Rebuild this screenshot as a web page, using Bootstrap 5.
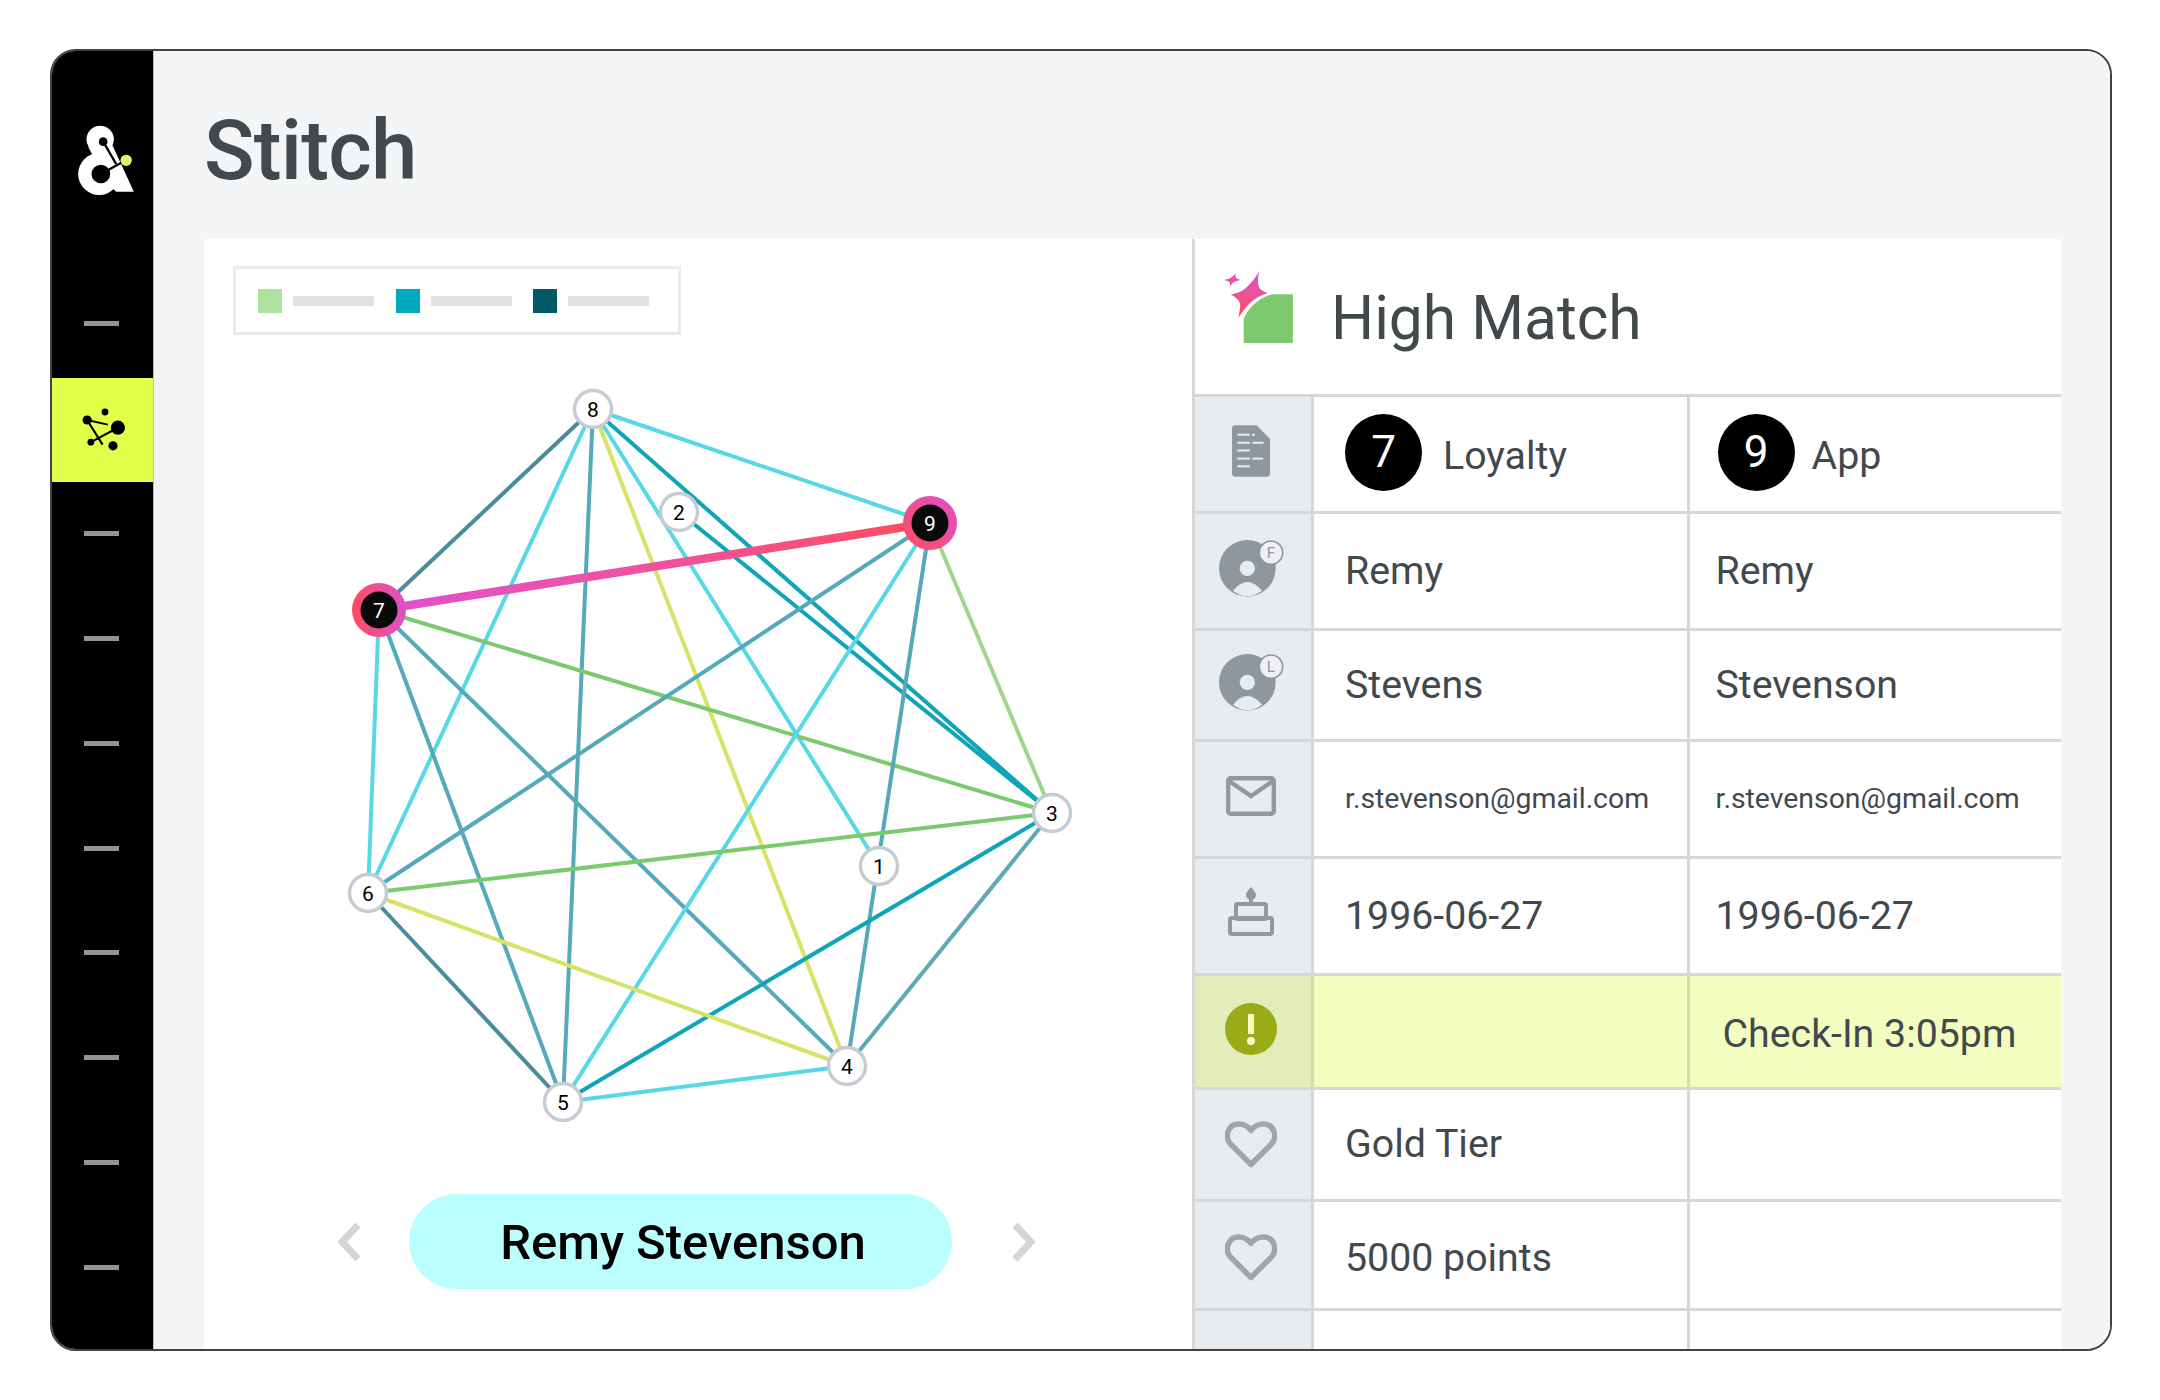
<!DOCTYPE html>
<html lang="en">
<head>
<meta charset="utf-8">
<title>Stitch</title>
<link href="https://cdn.jsdelivr.net/npm/bootstrap@5.3.0/dist/css/bootstrap.min.css" rel="stylesheet">
<style>
html,body{background:#fff;}
body{font-family:Roboto,"Liberation Sans",sans-serif;color:#42494c;width:2160px;height:1400px;overflow:hidden;}
.shell{width:2062px;height:1302px;margin:49px 0 0 50px;border:2px solid #3f4345;border-radius:26px;}
.rail{width:102px;flex:none;background:#000;border-right:1px solid #b9bdc1;}
.rail-logo{height:220px;padding-top:69px;flex:none;}
.rail-logo svg{display:block;margin-left:22px;}
.rail-item{height:104.95px;flex:none;}
.rail-dash{width:35px;height:5px;background:#919599;margin-left:-3px;}
.rail-on{background:#e4ff4a;height:104px;margin:2px 0 -1.2px -1px;flex:none;}
.rail-on svg{margin:0 0 3px 6px;}
.stage{background:#f3f5f7;min-width:0;}
.page-title{height:188px;padding-left:50px;flex:none;}
.page-title h1{font-size:83.5px;font-weight:500;color:#42494c;margin:12px 0 0 0;line-height:1;letter-spacing:-.8px;}
.sheet{margin:0 49px 0 50px;min-height:0;}
.graph{width:988px;flex:none;padding:27px 0 0 29px;}
.legend-box{width:448px;height:69px;border:3px solid #e9ebed;padding-left:22px;}
.sw{width:24px;height:24px;}
.sw-a{background:#ade39c;}.sw-b{background:#00a9bd;}.sw-c{background:#005a68;}
.lg-bar{width:81px;height:10px;background:#e0e3e6;margin:0 21.5px 0 11px;}
.graph > svg{display:block;margin:15px 0 0 -29px;}
.who-row{margin:49px 0 0 104px;}
.who{width:543px;height:95px;background:#bbfefe;color:#000;font-size:49px;font-weight:500;margin:0 59px 0 47px;line-height:1;flex:none;padding:1px 0 0 5px;}
.info{border-left:3px solid #d5d8db;min-width:0;}
.info-head{height:155px;padding-left:29px;flex:none;}
.info-head svg{margin:0 38px 20px 0;flex:none;}
.info-head span{font-size:60.5px;line-height:1;margin-top:6px;}
.trow{border-top:3px solid #d5d8db;height:117px;font-size:39.3px;flex:none;}
.trow.h111{height:111px}.trow.h114{height:114px}.trow.h112{height:112px}.trow.h109{height:109px}.trow.h60{height:60px}
.ticon{width:116px;flex:none;background:#e9ecef;padding:0 4px 6px 0;}
.ticon.icon-mid{padding-bottom:0;}
.ticon.icon-low{padding:5px 4px 0 0;}
.ticon.icon-up{padding-bottom:10px;}
.tcell{width:375.5px;flex:none;border-left:3px solid #d5d8db;padding-left:31px;}
.tcell+.tcell{padding-left:26px;}
.small-mail{font-size:28.4px;}
.alert-row{background:#f3fdbf;}
.alert-row .ticon{background:#e3edbb;}
.alert-row .tcell{border-left-color:#d4dcaf;}
.alert-row .tcell+.tcell span{margin:6px 0 0 7px;}
.num{width:77px;height:77px;background:#000;color:#fff;font-size:44px;margin:0 21px 4px 0;line-height:1;flex:none;}
.tcell+.tcell .num{margin-right:17px;margin-left:2px;}
.lift{position:relative;top:2px;}
.low-text{margin-top:6px;}
.graph text{font-family:Roboto,"Liberation Sans",sans-serif;font-size:21px;text-anchor:middle;}
</style>
</head>
<body>
<div class="shell d-flex overflow-hidden">
  <nav class="rail d-flex flex-column">
    <div class="rail-logo">
      <svg width="67" height="80" viewBox="100 60 200 240">
        <circle cx="178" cy="118" r="41" fill="#fff"/>
        <circle cx="175" cy="222" r="63" fill="#fff"/>
        <polygon points="142,140 212,130 279,275 226,275 200,250" fill="#fff"/>
        <circle cx="187" cy="125" r="13" fill="#000"/>
        <line x1="187" y1="125" x2="226" y2="192" stroke="#000" stroke-width="7"/>
        <circle cx="180" cy="222" r="28" fill="#000"/>
        <line x1="180" y1="222" x2="255" y2="181" stroke="#000" stroke-width="7"/>
        <circle cx="256" cy="181" r="17" fill="#e0f868"/>
      </svg>
    </div>
    <div class="rail-item d-flex align-items-center justify-content-center"><div class="rail-dash"></div></div>
    <div class="rail-on d-flex align-items-center justify-content-center">
      <svg width="48" height="48" viewBox="118 104 156 144">
        <g stroke="#000" fill="none"><line x1="138" y1="150" x2="205" y2="165" stroke-width="6"/><line x1="138" y1="150" x2="188" y2="230" stroke-width="7"/><line x1="150" y1="222" x2="238" y2="175" stroke-width="7"/></g>
        <circle cx="138" cy="150" r="15"/><circle cx="196" cy="124" r="11"/><circle cx="238" cy="175" r="23"/><circle cx="150" cy="222" r="11"/><circle cx="222" cy="234" r="15"/>
      </svg>
    </div>
    <div class="rail-item d-flex align-items-center justify-content-center"><div class="rail-dash"></div></div>
    <div class="rail-item d-flex align-items-center justify-content-center"><div class="rail-dash"></div></div>
    <div class="rail-item d-flex align-items-center justify-content-center"><div class="rail-dash"></div></div>
    <div class="rail-item d-flex align-items-center justify-content-center"><div class="rail-dash"></div></div>
    <div class="rail-item d-flex align-items-center justify-content-center"><div class="rail-dash"></div></div>
    <div class="rail-item d-flex align-items-center justify-content-center"><div class="rail-dash"></div></div>
    <div class="rail-item d-flex align-items-center justify-content-center"><div class="rail-dash"></div></div>
    <div class="rail-item d-flex align-items-center justify-content-center"><div class="rail-dash"></div></div>
  </nav>
  <main class="stage flex-grow-1 d-flex flex-column">
    <div class="page-title d-flex align-items-center"><h1>Stitch</h1></div>
    <div class="sheet bg-white d-flex flex-grow-1 overflow-hidden">
      <section class="graph">
        <div class="legend-box d-flex align-items-center">
          <div class="sw sw-a"></div><div class="lg-bar"></div>
          <div class="sw sw-b"></div><div class="lg-bar"></div>
          <div class="sw sw-c"></div><div class="lg-bar"></div>
        </div>
        <svg width="988" height="795" viewBox="204 350 988 795">
          <defs>
            <linearGradient id="gl" gradientUnits="userSpaceOnUse" x1="379" y1="610" x2="930" y2="523"><stop offset="0" stop-color="#e050cc"/><stop offset=".4" stop-color="#ec52aa"/><stop offset="1" stop-color="#ff4d5e"/></linearGradient>
            <linearGradient id="gr7" x1="0" y1="0" x2="1" y2="0"><stop offset="0" stop-color="#ff4d5e"/><stop offset="1" stop-color="#dd50cc"/></linearGradient>
            <linearGradient id="gr9" x1="0" y1="1" x2="1" y2="0"><stop offset="0" stop-color="#ff4d5e"/><stop offset="1" stop-color="#dd50cc"/></linearGradient>
          </defs>
          <g stroke-width="4" fill="none">
            <line x1="593" y1="409" x2="379" y2="610" stroke="#4a8b9c"/>
            <line x1="593" y1="409" x2="368" y2="893" stroke="#57d8e7"/>
            <line x1="593" y1="409" x2="563" y2="1102" stroke="#54a9ba"/>
            <line x1="593" y1="409" x2="847" y2="1066" stroke="#d8e264"/>
            <line x1="593" y1="409" x2="879" y2="866" stroke="#57d8e7"/>
            <line x1="593" y1="409" x2="1052" y2="813" stroke="#0ea5b8"/>
            <line x1="593" y1="409" x2="930" y2="523" stroke="#57d8e7"/>
            <line x1="679" y1="512" x2="1052" y2="813" stroke="#0ea5b8"/>
            <line x1="379" y1="610" x2="1052" y2="813" stroke="#7bca6e"/>
            <line x1="379" y1="610" x2="368" y2="893" stroke="#57d8e7"/>
            <line x1="379" y1="610" x2="563" y2="1102" stroke="#54a9ba"/>
            <line x1="379" y1="610" x2="847" y2="1066" stroke="#54a9ba"/>
            <line x1="930" y1="523" x2="368" y2="893" stroke="#54a9ba"/>
            <line x1="930" y1="523" x2="563" y2="1102" stroke="#57d8e7"/>
            <line x1="930" y1="523" x2="847" y2="1066" stroke="#54a9ba"/>
            <line x1="930" y1="523" x2="1052" y2="813" stroke="#a0d68c"/>
            <line x1="1052" y1="813" x2="368" y2="893" stroke="#7bca6e"/>
            <line x1="1052" y1="813" x2="563" y2="1102" stroke="#0ea5b8"/>
            <line x1="1052" y1="813" x2="847" y2="1066" stroke="#5fa8b6"/>
            <line x1="368" y1="893" x2="563" y2="1102" stroke="#4a8b9c"/>
            <line x1="368" y1="893" x2="847" y2="1066" stroke="#d8e264"/>
            <line x1="563" y1="1102" x2="847" y2="1066" stroke="#57d8e7"/>
          </g>
          <line x1="379" y1="610" x2="930" y2="523" stroke="url(#gl)" stroke-width="8.5"/>
          <g fill="#fff" stroke="#c5ccd3" stroke-width="3.5">
            <circle cx="593" cy="409" r="18.5"/><circle cx="679" cy="512" r="18.5"/><circle cx="1052" cy="813" r="18.5"/><circle cx="879" cy="866" r="18.5"/><circle cx="847" cy="1066" r="18.5"/><circle cx="563" cy="1102" r="18.5"/><circle cx="368" cy="893" r="18.5"/>
          </g>
          <circle cx="379" cy="610" r="27" fill="url(#gr7)"/><circle cx="379" cy="610" r="18.5" fill="#0a0a0a"/>
          <circle cx="930" cy="523" r="27" fill="url(#gr9)"/><circle cx="930" cy="523" r="18.5" fill="#0a0a0a"/>
          <g fill="#000">
            <text x="593" y="416.5">8</text><text x="679" y="519.5">2</text><text x="1052" y="820.5">3</text><text x="879" y="873.5">1</text><text x="847" y="1073.5">4</text><text x="563" y="1109.5">5</text><text x="368" y="900.5">6</text>
          </g>
          <g fill="#fff"><text x="379" y="617.5">7</text><text x="930" y="530.5">9</text></g>
        </svg>
        <div class="who-row d-flex align-items-center">
          <svg width="25" height="40" viewBox="0 0 25 40"><polyline points="21,3 5,20 21,37" fill="none" stroke="#d3d6d8" stroke-width="7"/></svg>
          <div class="who rounded-pill d-flex align-items-center justify-content-center">Remy Stevenson</div>
          <svg width="25" height="40" viewBox="0 0 25 40"><polyline points="4,3 20,20 4,37" fill="none" stroke="#d3d6d8" stroke-width="7"/></svg>
        </div>
      </section>
      <section class="info flex-grow-1 d-flex flex-column">
        <div class="info-head d-flex align-items-center">
          <svg width="69" height="72" viewBox="75 60 207 217">
            <defs><linearGradient id="st" gradientUnits="userSpaceOnUse" x1="150" y1="60" x2="130" y2="201"><stop offset="0" stop-color="#dd55cc"/><stop offset="1" stop-color="#ff4d5e"/></linearGradient></defs>
            <path d="M134 277H282V130H220C190 136 150 165 134 203Z" fill="#7cc96e"/>
            <path d="M181 60C174 88 176 108 186 116C192 121 200 124 206 127C188 133 170 140 154 156C140 170 128 186 118 201C120 186 126 168 122 156C118 146 106 136 94 131C112 129 132 120 146 106C158 94 172 76 181 60Z" fill="url(#st)"/>
            <path d="M110 67C107 80 110 84 125 87C112 90 100 92 92 107C95 95 92 90 75 87C90 85 100 80 110 67Z" fill="#ea4fa6"/>
          </svg>
          <span>High Match</span>
        </div>
        <div class="trow d-flex">
          <div class="ticon d-flex align-items-center justify-content-center">
            <svg width="38" height="52" viewBox="92 77 113 153"><path d="M102 77H165L205 118V220a10 10 0 0 1-10 10H102a10 10 0 0 1-10-10V87a10 10 0 0 1 10-10Z" fill="#8f979e"/><g fill="#e9ecef"><rect x="108" y="102" width="37" height="6"/><rect x="152" y="102" width="8" height="6"/><rect x="108" y="126" width="37" height="6"/><rect x="152" y="126" width="34" height="6"/><rect x="108" y="149" width="37" height="6"/><rect x="108" y="173" width="37" height="6"/><rect x="152" y="173" width="32" height="6"/><rect x="108" y="196" width="37" height="6"/></g></svg>
          </div>
          <div class="tcell d-flex align-items-center"><div class="num rounded-circle d-flex align-items-center justify-content-center">7</div><span class="lift">Loyalty</span></div>
          <div class="tcell d-flex align-items-center"><div class="num rounded-circle d-flex align-items-center justify-content-center">9</div><span class="lift">App</span></div>
        </div>
        <div class="trow d-flex">
          <div class="ticon d-flex align-items-center justify-content-center">
            <svg width="66" height="60" viewBox="55 415 198 178"><circle cx="143" cy="505" r="85" fill="#8f979e"/><circle cx="143" cy="505" r="23" fill="#e9ecef"/><path d="M100 572Q143 520 187 572Q143 605 100 572Z" fill="#e9ecef"/><circle cx="214" cy="458" r="35" fill="#eef0f2" stroke="#8f979e" stroke-width="5"/><text x="214" y="474" font-size="46" text-anchor="middle" fill="#8f979e" font-family="Roboto,sans-serif">F</text></svg>
          </div>
          <div class="tcell d-flex align-items-center"><span>Remy</span></div>
          <div class="tcell d-flex align-items-center"><span>Remy</span></div>
        </div>
        <div class="trow h111 d-flex">
          <div class="ticon d-flex align-items-center justify-content-center">
            <svg width="66" height="60" viewBox="55 415 198 178"><circle cx="143" cy="505" r="85" fill="#8f979e"/><circle cx="143" cy="505" r="23" fill="#e9ecef"/><path d="M100 572Q143 520 187 572Q143 605 100 572Z" fill="#e9ecef"/><circle cx="214" cy="458" r="35" fill="#eef0f2" stroke="#8f979e" stroke-width="5"/><text x="214" y="474" font-size="46" text-anchor="middle" fill="#8f979e" font-family="Roboto,sans-serif">L</text></svg>
          </div>
          <div class="tcell d-flex align-items-center"><span>Stevens</span></div>
          <div class="tcell d-flex align-items-center"><span>Stevenson</span></div>
        </div>
        <div class="trow d-flex">
          <div class="ticon d-flex align-items-center justify-content-center">
            <svg width="50" height="40" viewBox="0 0 50 40"><rect x="2.2" y="2.2" width="45.6" height="35.6" rx="2.5" fill="none" stroke="#9098a0" stroke-width="4.4"/><polyline points="3,5 25,20 47,5" fill="none" stroke="#9098a0" stroke-width="4.4"/></svg>
          </div>
          <div class="tcell d-flex align-items-center small-mail"><span>r.stevenson@gmail.com</span></div>
          <div class="tcell d-flex align-items-center small-mail"><span>r.stevenson@gmail.com</span></div>
        </div>
        <div class="trow d-flex">
          <div class="ticon icon-up d-flex align-items-center justify-content-center">
            <svg width="46" height="49" viewBox="0 0 46 49"><path d="M23 0C20 3 18 6 18 8A5 5 0 0 0 28 8C28 6 26 3 23 0Z" fill="#9098a0"/><g fill="none" stroke="#9098a0" stroke-width="4" stroke-linejoin="round"><line x1="23" y1="10" x2="23" y2="18"/><rect x="8" y="17" width="30" height="15" rx="1.5"/><rect x="2" y="31" width="42" height="16" rx="2"/></g></svg>
          </div>
          <div class="tcell d-flex align-items-center"><span>1996-06-27</span></div>
          <div class="tcell d-flex align-items-center"><span>1996-06-27</span></div>
        </div>
        <div class="trow h114 d-flex alert-row">
          <div class="ticon d-flex align-items-center justify-content-center">
            <svg width="52" height="52" viewBox="0 0 52 52"><circle cx="26" cy="26" r="26" fill="#9aab18"/><rect x="23" y="11" width="6" height="20" fill="#f3fdbf"/><circle cx="26" cy="38" r="4" fill="#f3fdbf"/></svg>
          </div>
          <div class="tcell d-flex align-items-center"></div>
          <div class="tcell d-flex align-items-center"><span>Check-In 3:05pm</span></div>
        </div>
        <div class="trow h112 d-flex">
          <div class="ticon icon-mid d-flex align-items-center justify-content-center">
            <svg width="52" height="47" viewBox="0 0 52 47"><path d="M26 43.5L5.5 23C-1 16 3 3 13.5 3C19 3 23.5 6 26 9.5C28.5 6 33 3 38.5 3C49 3 53 16 46.5 23Z" fill="none" stroke="#a0a5aa" stroke-width="5.5" stroke-linejoin="round"/></svg>
          </div>
          <div class="tcell d-flex align-items-center"><span>Gold Tier</span></div>
          <div class="tcell d-flex align-items-center"></div>
        </div>
        <div class="trow h109 d-flex">
          <div class="ticon icon-low d-flex align-items-center justify-content-center">
            <svg width="52" height="47" viewBox="0 0 52 47"><path d="M26 43.5L5.5 23C-1 16 3 3 13.5 3C19 3 23.5 6 26 9.5C28.5 6 33 3 38.5 3C49 3 53 16 46.5 23Z" fill="none" stroke="#a0a5aa" stroke-width="5.5" stroke-linejoin="round"/></svg>
          </div>
          <div class="tcell d-flex align-items-center"><span class="low-text">5000 points</span></div>
          <div class="tcell d-flex align-items-center"></div>
        </div>
        <div class="trow h60 d-flex">
          <div class="ticon"></div><div class="tcell"></div><div class="tcell"></div>
        </div>
      </section>
    </div>
  </main>
</div>
<script src="https://cdn.jsdelivr.net/npm/bootstrap@5.3.0/dist/js/bootstrap.bundle.min.js"></script>
</body>
</html>
